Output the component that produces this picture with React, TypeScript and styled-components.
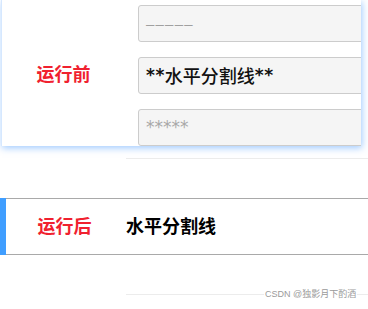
import React from "react";
import styled, { createGlobalStyle } from "styled-components";

const GlobalStyle = createGlobalStyle`
  html, body {
    margin: 0;
    padding: 0;
    background: #ffffff;
    font-family: "Liberation Sans", "Noto Sans CJK SC", sans-serif;
    overflow: hidden;
  }
`;

const Page = styled.div`
  position: relative;
  width: 368px;
  height: 309px;
  display: flex;
  flex-direction: column;
`;

const BeforeCard = styled.div`
  margin-left: 1px;
  width: 360px;
  height: 146px;
  box-sizing: border-box;
  padding-top: 4px;
  background: #ffffff;
  box-shadow: 1px 2px 7px rgba(64, 150, 255, 0.5);
  border-left: 1px solid #d6e8ff;
  overflow: hidden;
  display: grid;
  grid-template-columns: 123px 260px;
  column-gap: 13px;
  align-items: center;
`;

const Label = styled.div<{ $width: number }>`
  width: ${(p) => p.$width}px;
  text-align: center;
  color: #f0212f;
  font-family: "Noto Sans CJK SC", sans-serif;
  font-weight: 700;
  font-size: 18px;
  line-height: 24px;
  padding-bottom: 4px;
`;

const InputStack = styled.div`
  display: flex;
  flex-direction: column;
  gap: 15px;
`;

const Field = styled.div<{ $muted?: boolean }>`
  height: 37px;
  box-sizing: border-box;
  border: 1px solid #cccccc;
  border-radius: 3px;
  background: #f5f5f5;
  padding-left: 7px;
  display: flex;
  align-items: center;
  font-family: "Noto Sans CJK SC", sans-serif;
  font-size: 18px;
  color: ${(p) => (p.$muted ? "#a8a8a8" : "#111111")};
  font-weight: 500;
  white-space: nowrap;
`;

const Dashes = styled.span`
  font-family: "Liberation Sans", sans-serif;
  font-size: 15px;
  letter-spacing: 1.2px;
  color: #a0a0a0;
`;

const Stars = styled.span<{ $muted?: boolean }>`
  font-family: "DejaVu Sans", sans-serif;
  font-size: 17px;
  color: ${(p) => (p.$muted ? "#a8a8a8" : "#111111")};
  letter-spacing: ${(p) => (p.$muted ? "0px" : "0.5px")};
  font-weight: ${(p) => (p.$muted ? 400 : 700)};
`;

const Rule = styled.div<{ $top: number }>`
  margin-top: ${(p) => p.$top}px;
  margin-left: 126px;
  height: 1px;
  background: #ececec;
`;

const AfterRow = styled.div`
  margin-top: 39px;
  display: flex;
  align-items: stretch;
`;

const AccentBar = styled.div`
  width: 6px;
  background: #409eff;
  flex: none;
`;

const AfterBody = styled.div`
  flex: 1;
  height: 57px;
  box-sizing: border-box;
  border-top: 1px solid #a9a9a9;
  border-bottom: 1px solid #a9a9a9;
  display: flex;
  align-items: center;
  gap: 3px;
`;

const Result = styled.div`
  font-family: "Noto Sans CJK SC", sans-serif;
  font-weight: 700;
  font-size: 18px;
  color: #000000;
  line-height: 24px;
  padding-bottom: 4px;
`;

const FooterRule = styled.div`
  position: relative;
  margin-top: 39px;
  margin-left: 126px;
  height: 1px;
  background: #ececec;
`;

const Watermark = styled.span`
  position: absolute;
  left: 138px;
  top: -6px;
  padding: 0 1px;
  background: #ffffff;
  font-family: "Liberation Sans", "Noto Sans CJK SC", sans-serif;
  font-size: 9px;
  line-height: 12px;
  color: #9a9a9a;
  white-space: nowrap;
`;

export default function App() {
  return (
    <>
      <GlobalStyle />
      <Page>
        <BeforeCard>
          <Label $width={123}>运行前</Label>
          <InputStack>
            <Field $muted>
              <Dashes>–––––</Dashes>
            </Field>
            <Field>
              <Stars>**</Stars>水平分割线<Stars>**</Stars>
            </Field>
            <Field $muted>
              <Stars $muted>*****</Stars>
            </Field>
          </InputStack>
        </BeforeCard>
        <Rule $top={12} />
        <AfterRow>
          <AccentBar />
          <AfterBody>
            <Label $width={117}>运行后</Label>
            <Result>水平分割线</Result>
          </AfterBody>
        </AfterRow>
        <FooterRule>
          <Watermark>CSDN @独影月下酌酒</Watermark>
        </FooterRule>
      </Page>
    </>
  );
}
